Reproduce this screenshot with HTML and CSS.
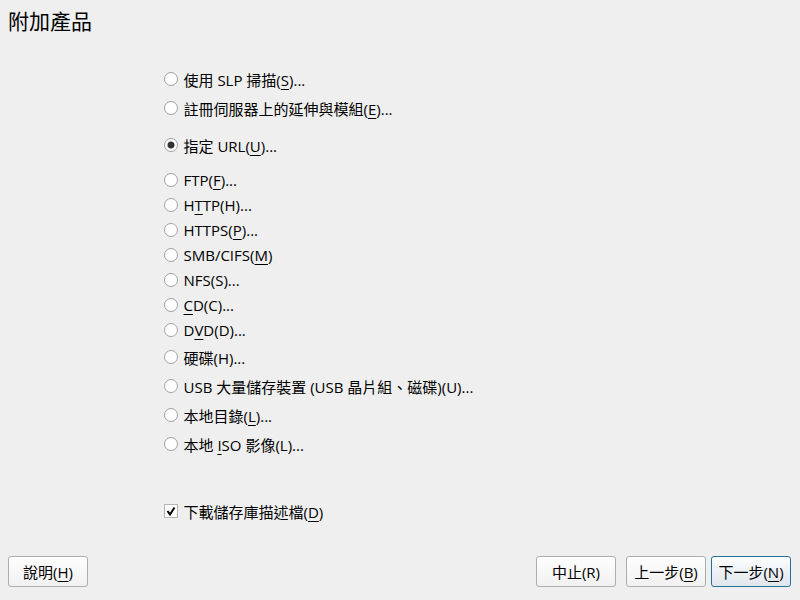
FILE: index.html
```html
<!DOCTYPE html>
<html lang="zh-Hant">
<head>
<meta charset="utf-8">
<title>附加產品</title>
<link rel="stylesheet" href="styles.css">
</head>
<body>
<form class="wizard">
<h1 class="title">附加產品</h1>
<div class="content">
<div class="sources" role="radiogroup" aria-label="附加產品">
<label class="option cjk"><input type="radio" name="source"><span>使用 SLP 掃描(<u>S</u>)...</span></label>
<label class="option cjk"><input type="radio" name="source"><span>註冊伺服器上的延伸與模組(<u>E</u>)...</span></label>
<label class="option cjk selected"><input type="radio" name="source" checked><span>指定 URL(<u>U</u>)...</span></label>
<label class="option"><input type="radio" name="source"><span>FTP(<u>F</u>)...</span></label>
<label class="option"><input type="radio" name="source"><span>H<u>T</u>TP(H)...</span></label>
<label class="option"><input type="radio" name="source"><span>HTTPS(<u>P</u>)...</span></label>
<label class="option"><input type="radio" name="source"><span>SMB/CIFS(<u>M</u>)</span></label>
<label class="option"><input type="radio" name="source"><span>NFS(S)...</span></label>
<label class="option"><input type="radio" name="source"><span><u>C</u>D(C)...</span></label>
<label class="option"><input type="radio" name="source"><span>D<u>V</u>D(D)...</span></label>
<label class="option cjk"><input type="radio" name="source"><span>硬碟(H)...</span></label>
<label class="option cjk"><input type="radio" name="source"><span>USB 大量儲存裝置 (USB 晶片組、磁碟)(U)...</span></label>
<label class="option cjk"><input type="radio" name="source"><span>本地目錄(<u>L</u>)...</span></label>
<label class="option cjk"><input type="radio" name="source"><span>本地 <u>I</u>SO 影像(L)...</span></label>
</div>
<label class="option cjk download">
<span class="check"><input type="checkbox" checked><svg viewBox="0 0 14 14" aria-hidden="true"><path d="M3.5 7 6 10.5 10.5 3.5"/></svg></span>
<span>下載儲存庫描述檔(<u>D</u>)</span>
</label>
</div>
<div class="actions">
<button type="button" class="help">說明(<u>H</u>)</button>
<button type="button" class="abort">中止(R)</button>
<button type="button">上一步(<u>B</u>)</button>
<button type="submit" class="next">下一步(<u>N</u>)</button>
</div>
</form>
</body>
</html>
```
FILE: styles.css
```css
* {
  box-sizing: border-box;
}

body {
  margin: 0;
  background: #efefef;
  color: #000;
  font: 15px/20px "Open Sans", "Noto Sans CJK TC", sans-serif;
}

.wizard {
  display: flex;
  flex-direction: column;
  min-height: 100vh;
  padding: 8px 9px 13px 8px;
}

.title {
  margin: 0;
  font-size: 21px;
  line-height: 26px;
  font-weight: 400;
}

.content {
  flex: 1;
  margin: 30px auto 0;
  width: 100%;
  max-width: 472px;
}

.sources {
  display: flex;
  flex-direction: column;
}

.option {
  display: flex;
  align-items: center;
  gap: 6px;
  height: 25px;
}

.option.cjk {
  height: 29px;
}

.option.cjk > span:last-child {
  padding-top: 2px;
}

.option.selected {
  margin: 8px 0;
}

u {
  text-decoration-thickness: 1px;
  text-underline-offset: 3px;
  text-decoration-skip-ink: none;
}

.option input {
  appearance: none;
  display: block;
  flex: none;
  margin: 0;
  width: 14px;
  height: 14px;
  border: 1px solid #a0a0a0;
  background: #fff;
}

.option input[type="radio"] {
  border-radius: 50%;
}

.option input[type="radio"]:checked {
  background: radial-gradient(circle, #333 3px, #fff 4px);
}

.option input[type="checkbox"] {
  border-color: #b4b4b4;
}

.check {
  position: relative;
  flex: none;
}

.check svg {
  position: absolute;
  inset: 0;
  display: none;
  fill: none;
  stroke: #000;
  stroke-width: 2;
  pointer-events: none;
}

.check input:checked + svg {
  display: block;
}

.download {
  margin-top: 38px;
}

.actions {
  display: flex;
  gap: 5px;
}

button {
  width: 80px;
  height: 31px;
  padding: 0;
  border: 1px solid #adadad;
  border-radius: 3px;
  background: linear-gradient(#fefefe, #f1f1f1);
  color: inherit;
  font: inherit;
}

.help {
  margin-right: auto;
}

.abort {
  margin-right: 5px;
}

.next {
  border-color: #256f99;
  background: linear-gradient(#fcfdfe, #dfe6ec);
}
```
